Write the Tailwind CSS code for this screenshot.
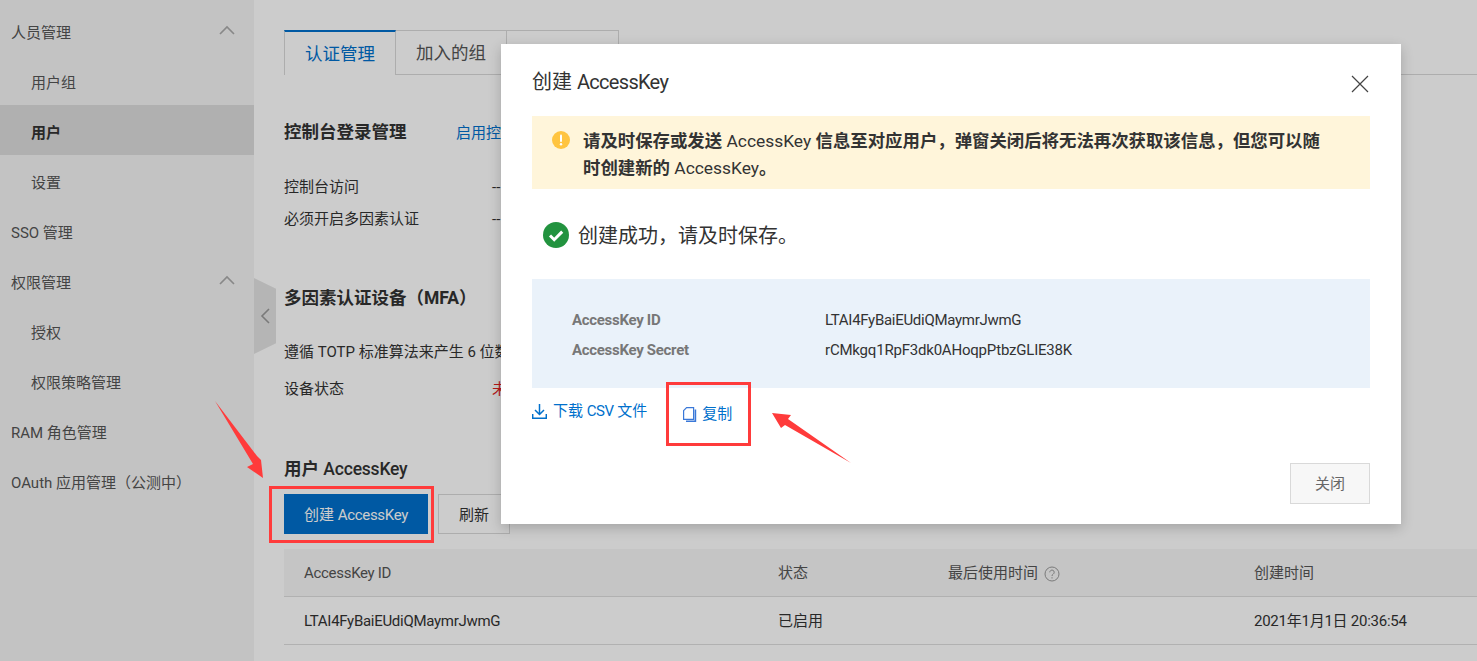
<!DOCTYPE html>
<html lang="zh">
<head>
    <meta charset="UTF-8">
    <title>创建 AccessKey</title>
    <script src="https://cdn.jsdelivr.net/npm/@tailwindcss/browser@4"></script>
</head>
<body class="relative h-screen overflow-hidden bg-white font-['Roboto','Noto_Sans_CJK_SC',sans-serif] text-[15px] text-[#333]">

    <div class="flex h-full">
        <!-- 侧边栏 -->
        <aside class="w-[254px] shrink-0 bg-[#f4f4f4] pt-[5px] text-[#555]">
            <div class="flex h-[50px] items-center justify-between pl-[11px] pr-[19px] pt-[6px]">
                <span>人员管理</span>
                <svg class="mb-[6px]" width="16" height="10" viewBox="0 0 16 10" fill="none" stroke="#aaa" stroke-width="1.6"><path d="M1 9l7-7 7 7"/></svg>
            </div>
            <div class="flex h-[50px] items-center pl-[31px] pt-[6px]">用户组</div>
            <div class="flex h-[50px] items-center bg-[#dcdcdc] pl-[31px] pt-[6px] font-bold text-[#333]">用户</div>
            <div class="flex h-[50px] items-center pl-[31px] pt-[6px]">设置</div>
            <div class="flex h-[50px] items-center pl-[11px] pt-[6px]">SSO 管理</div>
            <div class="flex h-[50px] items-center justify-between pl-[11px] pr-[19px] pt-[6px]">
                <span>权限管理</span>
                <svg class="mb-[6px]" width="16" height="10" viewBox="0 0 16 10" fill="none" stroke="#aaa" stroke-width="1.6"><path d="M1 9l7-7 7 7"/></svg>
            </div>
            <div class="flex h-[50px] items-center pl-[31px] pt-[6px]">授权</div>
            <div class="flex h-[50px] items-center pl-[31px] pt-[6px]">权限策略管理</div>
            <div class="flex h-[50px] items-center pl-[11px] pt-[6px]">RAM 角色管理</div>
            <div class="flex h-[50px] items-center pl-[11px] pt-[6px]">OAuth 应用管理（公测中）</div>
        </aside>

        <!-- 主内容 -->
        <main class="relative min-w-0 flex-1 pl-[30px] pt-[30px]">
            <!-- 收起手柄 -->
            <div class="absolute left-0 top-[278px] flex h-[76px] w-[22px] items-center justify-center bg-[#e3e3e3] [clip-path:polygon(0_0,100%_14%,100%_86%,0_100%)]">
                <svg width="10" height="16" viewBox="0 0 10 16" fill="none" stroke="#999" stroke-width="1.6"><path d="M9 1L2 8l7 7"/></svg>
            </div>

            <div class="flex h-[45px] border-b border-[#d9d9d9] text-[17.5px]">
                <div class="flex h-[45px] w-[112px] items-center justify-center border-l border-r border-t-2 border-l-[#d9d9d9] border-r-[#d9d9d9] border-t-[#0070cc] bg-white pt-[2px] text-[#0070cc]">认证管理</div>
                <div class="flex h-[44px] w-[111px] items-center justify-center border-r border-t border-[#d9d9d9] pt-[2px] text-[#555]">加入的组</div>
                <div class="flex h-[44px] w-[112px] items-center justify-center border-r border-t border-[#d9d9d9] pt-[4px] text-[#555]">权限管理</div>
            </div>

            <div class="mt-[45px] flex h-6 items-center">
                <h3 class="w-[172px] text-[17.5px] font-bold text-[#333]">控制台登录管理</h3>
                <a class="pt-[3px] text-[#0070cc]">启用控制台登录</a>
            </div>
            <div class="mt-[26px] flex h-8 items-center pt-[2px]"><span class="w-[208px]">控制台访问</span><span>--</span></div>
            <div class="flex h-8 items-center pt-[2px]"><span class="w-[208px]">必须开启多因素认证</span><span>--</span></div>

            <h3 class="mt-[52px] h-6 text-[17.5px] font-bold leading-6 text-[#333]">多因素认证设备（MFA）</h3>
            <p class="mt-[26px] h-8 whitespace-nowrap leading-8">遵循 TOTP 标准算法来产生 6 位数字验证码</p>
            <div class="mt-[5px] flex h-8 items-center"><span class="w-[208px]">设备状态</span><span class="text-[#e02020]">未启用</span></div>

            <h3 class="mt-[52px] h-6 text-[17.5px] font-bold leading-6 text-[#333]">用户 <span class="font-medium tracking-[-0.2px]">AccessKey</span></h3>
            <div class="mt-[13px] flex gap-[10px]">
                <button class="h-10 w-[144px] bg-[#0070cc] pt-[2px] text-white">创建 <span class="tracking-[-0.3px]">AccessKey</span></button>
                <button class="h-10 w-[72px] border border-[#d9d9d9] bg-white pt-[2px] text-[#333]">刷新</button>
            </div>

            <div class="mt-[15px] flex h-12 items-center border-b border-[#dedede] bg-[#f7f7f7] pl-5 pt-[2px] text-[#555]">
                <span class="w-[474px] tracking-[-0.3px]">AccessKey ID</span>
                <span class="w-[170px]">状态</span>
                <span class="flex w-[306px] items-center gap-[6px]">最后使用时间
                    <svg width="16" height="16" viewBox="0 0 16 16" fill="none" stroke="#999"><circle cx="8" cy="8" r="7"/><path d="M5.8 6.3a2.2 2.2 0 1 1 3.4 1.8c-.8.5-1.2.9-1.2 1.9M8 11.2v1.3"/></svg>
                </span>
                <span>创建时间</span>
            </div>
            <div class="flex h-12 items-center border-b border-[#dedede] pl-5 pt-[2px]">
                <span class="w-[474px] tracking-[-0.29px]">LTAI4FyBaiEUdiQMaymrJwmG</span>
                <span class="w-[476px]">已启用</span>
                <span class="whitespace-nowrap tracking-[-0.25px]">2021年1月1日 20:36:54</span>
            </div>
        </main>
    </div>

    <!-- 遮罩 -->
    <div class="absolute inset-0 bg-black/20"></div>

    <!-- 弹窗 -->
    <div class="absolute left-[501px] top-[44px] h-[480px] w-[900px] bg-white px-[31px] shadow-[0_4px_12px_rgba(0,0,0,0.2)]">
        <div class="flex h-[72px] items-center justify-between pr-[1px] pt-[4px]">
            <h2 class="text-[20px] leading-7 text-[#333]">创建 <span class="tracking-[-0.7px]">AccessKey</span></h2>
            <svg class="mt-[4px]" width="18" height="18" viewBox="0 0 18 18" fill="none" stroke="#444" stroke-width="1.2"><path d="M1 1l16 16M17 1L1 17"/></svg>
        </div>
        <div class="flex h-[73px] w-[838px] gap-[13px] bg-[#fff5da] pl-5 pr-4 pt-[12px]">
            <svg class="mt-[3px] shrink-0" width="18" height="18" viewBox="0 0 18 18"><circle cx="9" cy="9" r="9" fill="#ffc440"/><rect x="8" y="3.5" width="2" height="7.5" rx="1" fill="#fff"/><circle cx="9" cy="13.3" r="1.2" fill="#fff"/></svg>
            <p class="text-[17.4px] font-bold leading-[27px] text-[#333]">请及时保存或发送 <span class="font-normal">AccessKey</span> 信息至对应用户，弹窗关闭后将无法再次获取该信息，但您可以随<br>时创建新的 <span class="font-normal">AccessKey</span>。</p>
        </div>
        <div class="mt-[31px] flex h-[30px] items-center gap-[9px] pl-[11px]">
            <svg width="26" height="26" viewBox="0 0 26 26"><circle cx="13" cy="13" r="13" fill="#22933f"/><path d="M7 13.5l4.2 4.2L19.2 9.6" fill="none" stroke="#fff" stroke-width="3"/></svg>
            <span class="pt-[2px] text-[20px] text-[#333]">创建成功，请及时保存。</span>
        </div>
        <div class="mt-[29px] h-[109px] w-[838px] bg-[#eaf2fa] pl-10 pt-[26px]">
            <div class="flex h-[30px] items-center"><span class="w-[253px] font-bold tracking-[-0.3px] text-[#777]">AccessKey ID</span><span class="tracking-[-0.29px]">LTAI4FyBaiEUdiQMaymrJwmG</span></div>
            <div class="flex h-[30px] items-center"><span class="w-[253px] font-bold tracking-[-0.3px] text-[#777]">AccessKey Secret</span><span class="tracking-[-0.2px]">rCMkgq1RpF3dk0AHoqpPtbzGLIE38K</span></div>
        </div>
        <div class="mt-[11px] flex text-[#0070cc]">
            <a class="flex h-[24px] items-center gap-[6px]">
                <svg width="15" height="15" viewBox="0 0 15 15" fill="none" stroke="#0070cc" stroke-width="1.5"><path d="M7.5 0v10M3 6l4.5 4.5L12 6M.7 10v4.2h13.6V10"/></svg>
                <span>下载 <span class="tracking-[-0.5px]">CSV</span> 文件</span>
            </a>
            <a class="ml-[36px] mt-[3px] flex h-[24px] items-center gap-[5px]">
                <svg width="14" height="15" viewBox="0 0 14 15" fill="none" stroke="#3a78d8" stroke-width="1.2"><path d="M.6 3.6L3.6.6h7v11.8H.6z"/><path d="M12.4 2.5v11.9H3" stroke-width="1.6"/></svg>
                复制
            </a>
        </div>
        <div class="mt-[37px] flex w-[838px] justify-end">
            <button class="h-[41px] w-20 border border-[#d9d9d9] bg-[#f7f7f7] pt-[2px] text-[#666]">关闭</button>
        </div>
    </div>

    <!-- 标注 -->
    <div class="absolute left-[269px] top-[486px] h-[57px] w-[165px] border-[3px] border-[#ff3b3b]"></div>
    <div class="absolute left-[666px] top-[382px] h-[64px] w-[85px] border-[3px] border-[#ff3b3b]"></div>
    <svg class="absolute left-0 top-0" width="1477" height="661" fill="#ff3b3b">
        <polygon points="215,401 257,456 261,460 263,478 247,467 253,464"/>
        <polygon points="772,413 791,415 788,419 851,463 785,425 781,428"/>
    </svg>

</body>
</html>
